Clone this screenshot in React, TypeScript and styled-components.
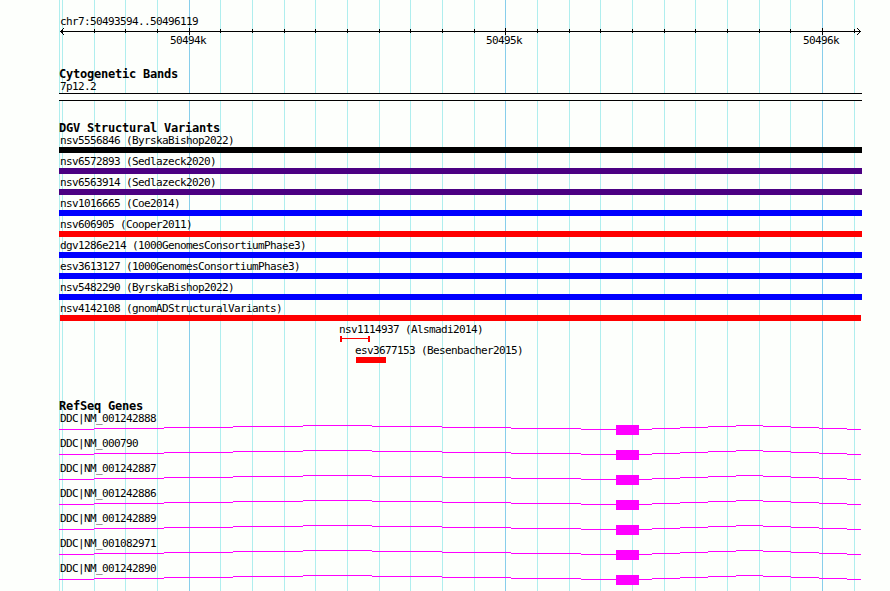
import styled, { createGlobalStyle } from 'styled-components'

const TRACK_LEFT = 59
const TRACK_WIDTH = 803
const PAGE_HEIGHT = 591

const MINOR_TICKS = [
  62, 94, 125, 157, 220, 252, 284, 315, 347, 379, 410, 442, 474, 537, 569, 600, 632, 664, 695, 727,
  759, 790, 854,
]

const MAJOR_TICKS = [
  { x: 189, label: '50494k' },
  { x: 505, label: '50495k' },
  { x: 822, label: '50496k' },
]

type Variant = {
  name: string
  color: string
  start?: number
  width?: number
  range?: boolean
}

const VARIANTS: Variant[] = [
  { name: 'nsv5556846 (ByrskaBishop2022)', color: '#000000' },
  { name: 'nsv6572893 (Sedlazeck2020)', color: '#4b0082' },
  { name: 'nsv6563914 (Sedlazeck2020)', color: '#4b0082' },
  { name: 'nsv1016665 (Coe2014)', color: '#0000ff' },
  { name: 'nsv606905 (Cooper2011)', color: '#ff0000' },
  { name: 'dgv1286e214 (1000GenomesConsortiumPhase3)', color: '#0000ff' },
  { name: 'esv3613127 (1000GenomesConsortiumPhase3)', color: '#0000ff' },
  { name: 'nsv5482290 (ByrskaBishop2022)', color: '#0000ff' },
  { name: 'nsv4142108 (gnomADStructuralVariants)', color: '#ff0000', start: 1, width: 801 },
  { name: 'nsv1114937 (Alsmadi2014)', color: '#ff0000', start: 281, width: 30, range: true },
  { name: 'esv3677153 (Besenbacher2015)', color: '#ff0000', start: 297, width: 30 },
]

const GENES = [
  'DDC|NM_001242888',
  'DDC|NM_000790',
  'DDC|NM_001242887',
  'DDC|NM_001242886',
  'DDC|NM_001242889',
  'DDC|NM_001082971',
  'DDC|NM_001242890',
]

// [from, to, y] pieces of the intron line
const INTRON_STEPS = [
  [0, 35, 4],
  [35, 105, 3],
  [105, 174, 2],
  [174, 244, 1],
  [244, 313, 0],
  [313, 383, 1],
  [383, 452, 2],
  [452, 522, 3],
  [522, 557, 4],
  [580, 593, 4],
  [593, 621, 3],
  [621, 649, 2],
  [649, 677, 1],
  [677, 704, 0],
  [704, 732, 1],
  [732, 760, 2],
  [760, 788, 3],
  [788, 802, 4],
]

const GlobalStyle = createGlobalStyle`
  body {
    margin: 0;
    background: #fdfffc;
    overflow: hidden;
  }
`

const Page = styled.main`
  position: relative;
  box-sizing: border-box;
  height: ${PAGE_HEIGHT}px;
  padding: 15px 0 0 ${TRACK_LEFT}px;
  overflow: hidden;
  color: #000;
  font-family: 'DejaVu Sans Mono', monospace;
  font-size: 11px;
  letter-spacing: -0.622px;
`

const Grid = styled.svg`
  position: absolute;
  top: 0;
  left: 0;
  shape-rendering: crispEdges;
`

const Tracks = styled.div`
  position: relative;
  width: ${TRACK_WIDTH}px;
`

const Track = styled.section<{ $gap: number }>`
  padding-top: ${(p) => p.$gap}px;
`

const TrackTitle = styled.h2`
  height: 13px;
  margin: 0;
  font-size: 12px;
  font-weight: bold;
  line-height: 14px;
  letter-spacing: -0.224px;
  white-space: pre;
`

const Label = styled.div<{ $start?: number }>`
  height: 13px;
  padding-left: ${(p) => Math.max((p.$start ?? 0) - 1, 0) + ((p.$start ?? 0) > 1 ? 0 : 1)}px;
  line-height: 13px;
  white-space: pre;
`

const Axis = styled.svg`
  display: block;
  overflow: visible;
`

const BandBox = styled.div`
  box-sizing: border-box;
  height: 8px;
  border: solid #000;
  border-width: 1px 0;
  background: #fdfffc;
`

const VariantRow = styled.div`
  height: 21px;
`

const VariantBar = styled.div<{ $start: number; $width: number; $color: string }>`
  width: ${(p) => p.$width}px;
  height: 6px;
  margin-left: ${(p) => p.$start}px;
  background: ${(p) => p.$color};
`

const VariantRange = styled.div<{ $start: number; $width: number; $color: string }>`
  box-sizing: border-box;
  width: ${(p) => p.$width}px;
  height: 6px;
  margin-left: ${(p) => p.$start}px;
  border: solid ${(p) => p.$color};
  border-width: 0 2px;
  background: linear-gradient(${(p) => p.$color}, ${(p) => p.$color}) 0 2px / 100% 1px no-repeat;
`

const GeneRow = styled.div`
  height: 25px;
`

const GeneModel = styled.svg`
  display: block;
  shape-rendering: crispEdges;
`

function GridLines() {
  return (
    <Grid width={890} height={PAGE_HEIGHT}>
      {[TRACK_LEFT, ...MINOR_TICKS].map((x) => (
        <rect key={x} x={x} y={0} width={1} height={PAGE_HEIGHT} fill="#afeeee" />
      ))}
      {MAJOR_TICKS.map(({ x }) => (
        <rect key={x} x={x} y={0} width={1} height={PAGE_HEIGHT} fill="#87ceeb" />
      ))}
    </Grid>
  )
}

function Ruler() {
  return (
    <Axis width={TRACK_WIDTH} height={20}>
      <g shapeRendering="crispEdges">
        <rect x={1} y={3} width={801} height={1} />
        {MINOR_TICKS.map((x) => (
          <rect key={x} x={x - TRACK_LEFT} y={1} width={1} height={4} />
        ))}
        {MAJOR_TICKS.map(({ x }) => (
          <rect key={x} x={x - TRACK_LEFT} y={0} width={1} height={7} />
        ))}
        {[1, 2, 3].map((i) => (
          <g key={i}>
            <rect x={1 + i} y={3 - i} width={1} height={1} />
            <rect x={1 + i} y={3 + i} width={1} height={1} />
            <rect x={801 - i} y={3 - i} width={1} height={1} />
            <rect x={801 - i} y={3 + i} width={1} height={1} />
          </g>
        ))}
      </g>
      {MAJOR_TICKS.map(({ x, label }) => (
        <text key={x} x={x - TRACK_LEFT - 19} y={16}>
          {label}
        </text>
      ))}
    </Axis>
  )
}

function Gene({ name }: { name: string }) {
  return (
    <GeneRow>
      <Label>{name}</Label>
      <GeneModel width={TRACK_WIDTH} height={10} fill="#ff00ff">
        {INTRON_STEPS.map(([from, to, y]) => (
          <rect key={from} x={from} y={y} width={to - from} height={1} />
        ))}
        <rect x={557} y={0} width={23} height={10} />
      </GeneModel>
    </GeneRow>
  )
}

function App() {
  return (
    <Page>
      <GlobalStyle />
      <GridLines />
      <Tracks>
        <Label>chr7:50493594..50496119</Label>
        <Ruler />
        <Track $gap={19}>
          <TrackTitle>Cytogenetic Bands</TrackTitle>
          <Label>7p12.2</Label>
          <BandBox />
        </Track>
        <Track $gap={20}>
          <TrackTitle>DGV Structural Variants</TrackTitle>
          {VARIANTS.map(({ name, color, start = 0, width = TRACK_WIDTH, range }) => {
            const Shape = range ? VariantRange : VariantBar
            return (
              <VariantRow key={name}>
                <Label $start={start}>{name}</Label>
                <Shape $start={start} $width={width} $color={color} />
              </VariantRow>
            )
          })}
        </Track>
        <Track $gap={34}>
          <TrackTitle>RefSeq Genes</TrackTitle>
          {GENES.map((name) => (
            <Gene key={name} name={name} />
          ))}
        </Track>
      </Tracks>
    </Page>
  )
}

export default App
